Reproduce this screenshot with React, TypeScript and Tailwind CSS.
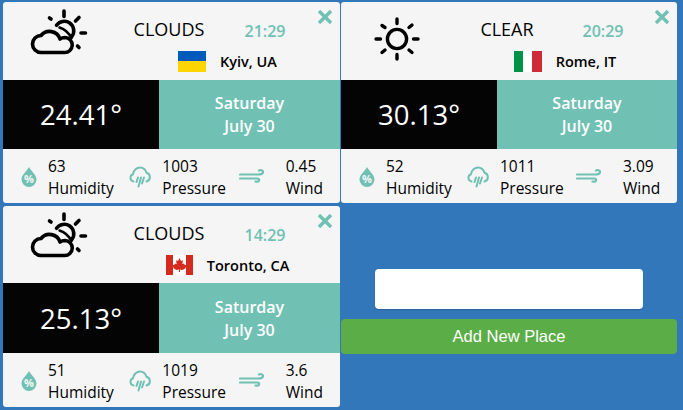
import React from 'react';

const TEAL = '#70c1b3';

const CloudSun = () => (
  <svg width="62" height="48" viewBox="28 8 62 48" fill="none" stroke="#000" strokeWidth="3.6" strokeLinecap="round" strokeLinejoin="round">
    <path d="M41 52.5H64.5A7.5 7.5 0 0 0 65 37.5C63 37.5 61.5 38 60 39A11 11 0 0 0 41 35.5A8.5 8.5 0 0 0 41 52.5Z" />
    <path d="M56.5 25.3A9.5 9.5 0 1 1 72 36.3" />
    <path d="M59.5 27.5C64 29 69 33 71.5 38" strokeWidth="2.6" />
    <path d="M64 11V16.5M75.5 21L79 17.5M81 33H85.5M77.5 46L79 47.5M49.5 18L51 19" />
  </svg>
);

const Sun = () => (
  <svg width="48" height="48" viewBox="373 15 48 48" fill="none" stroke="#000" strokeWidth="3.4" strokeLinecap="round">
    <circle cx="397" cy="39" r="9.6" />
    <path d="M397 19V23.5M397 54.5V59M376 39H380.5M413.5 39H418M382 25.5L385 27.5M409 27.5L412 25M382 52.5L385 50M409 50L412 52.5" />
  </svg>
);

const Drop = () => (
  <svg width="16" height="20" viewBox="0 0 16 20" className="mt-[1px]">
    <path d="M8 0C10 4 15.5 7.5 15.5 12.5A7.5 7.5 0 0 1 0.5 12.5C0.5 7.5 6 4 8 0Z" fill={TEAL} />
    <text x="8" y="16" textAnchor="middle" fontSize="11" fontWeight="700" fill="#f5f5f5" fontFamily="'Open Sans', sans-serif">%</text>
  </svg>
);

const CloudRain = () => (
  <svg width="22" height="22" viewBox="0 0 22 22" fill="none" stroke={TEAL} strokeWidth="2" strokeLinecap="round" strokeLinejoin="round">
    <path d="M4.5 15.5A3.8 3.8 0 0 1 4 8.2C4.5 4 8 1.5 11 1.5C14 1.5 16.5 3.5 17.5 6.8A4.5 4.5 0 0 1 17.5 15.5" />
    <path d="M9 11.5L7.5 16M12 11.5L9.5 20.5M15 11.5L13 17.5" />
  </svg>
);

const Wind = () => (
  <svg width="25" height="15" viewBox="0 0 25 15" fill="none" stroke={TEAL} strokeWidth="2.2" strokeLinecap="round">
    <path d="M1 5.5H19C22 5.5 24 4.5 24 2.8C24 1.2 21.5 0.8 20 1.5" />
    <path d="M1 9.5H18C20 9.5 20.5 10.5 20 11.7C19.5 12.7 18 12.8 16.5 12.5" />
  </svg>
);

const Close = () => (
  <svg width="14" height="14" viewBox="0 0 14 14" stroke={TEAL} strokeWidth="3.4" strokeLinecap="square">
    <path d="M2.2 2.2L11.8 11.8M11.8 2.2L2.2 11.8" />
  </svg>
);

const UA = () => (
  <div className="w-[28px] h-[21px] flex flex-col">
    <div className="flex-1 bg-[#005bbb]" />
    <div className="flex-1 bg-[#ffd500]" />
  </div>
);

const IT = () => (
  <div className="w-[28px] h-[21px] flex">
    <div className="flex-1 bg-[#009246]" />
    <div className="flex-1 bg-white" />
    <div className="flex-1 bg-[#ce2b37]" />
  </div>
);

const CA = () => (
  <svg width="27" height="20" viewBox="0 0 27 20">
    <rect width="27" height="20" fill="#fff" />
    <rect width="7" height="20" fill="#d52b1e" />
    <rect x="20" width="7" height="20" fill="#d52b1e" />
    <path d="M13.5 3L15 6L17 5.2L16.3 9L18 8.4L18.8 10L20.5 10L19.5 12.5L20 13L16.5 15L14 14.5L14 17H13L13 14.5L10.5 15L7 13L7.5 12.5L6.5 10L8.2 10L9 8.4L10.7 9L10 5.2L12 6Z" fill="#d52b1e" />
  </svg>
);

interface Place {
  condition: string;
  time: string;
  city: string;
  temp: string;
  humidity: string;
  pressure: string;
  wind: string;
  Icon: React.FC;
  Flag: React.FC;
  topClass: string;
  barClass: string;
  iconClass: string;
}

const PLACES: Place[] = [
  { condition: 'CLOUDS', time: '21:29', city: 'Kyiv, UA', temp: '24.41°', humidity: '63', pressure: '1003', wind: '0.45', Icon: CloudSun, Flag: UA, topClass: 'h-[78px]', barClass: 'h-[69px]', iconClass: 'pl-[25px] pt-[6px] w-[112px]' },
  { condition: 'CLEAR', time: '20:29', city: 'Rome, IT', temp: '30.13°', humidity: '52', pressure: '1011', wind: '3.09', Icon: Sun, Flag: IT, topClass: 'h-[78px]', barClass: 'h-[69px]', iconClass: 'pl-[32px] pt-[13px] w-[112px]' },
  { condition: 'CLOUDS', time: '14:29', city: 'Toronto, CA', temp: '25.13°', humidity: '51', pressure: '1019', wind: '3.6', Icon: CloudSun, Flag: CA, topClass: 'h-[77px]', barClass: 'h-[70px]', iconClass: 'pl-[25px] pt-[5px] w-[112px]' },
];

const Card = ({ place }: { place: Place }) => {
  const { Icon, Flag } = place;
  return (
    <div className="relative bg-[#f5f5f5] rounded-[3px] overflow-hidden text-black">
      <div className={`flex ${place.topClass}`}>
        <div className={place.iconClass}>
          <Icon />
        </div>
        <div className="flex-1 pt-[14px]">
          <div className="flex items-end h-[26px]">
            <div className="w-[108px] text-center text-[18px] leading-[26px]">{place.condition}</div>
            <div className="w-[84px] text-center text-[16px] leading-[24px] font-semibold text-[#70c1b3] translate-y-[1px]">{place.time}</div>
          </div>
          <div className="flex items-center justify-center gap-[14px] mt-[8px]">
            <Flag />
            <span className="text-[14.5px] leading-[21px] font-semibold pt-[1px]">{place.city}</span>
          </div>
        </div>
      </div>
      <button className="absolute top-[8px] right-[8px]" aria-label="Remove">
        <Close />
      </button>
      <div className={`flex ${place.barClass}`}>
        <div className="w-[156px] bg-[#040404] text-white text-[27.5px] pt-[1px] flex items-center justify-center">{place.temp}</div>
        <div className="flex-1 bg-[#70c1b3] text-white text-[16px] leading-[23px] pt-[1px] font-semibold flex flex-col items-center justify-center">
          <span>Saturday</span>
          <span>July 30</span>
        </div>
      </div>
      <div className="grid grid-cols-3 h-[54px] pt-[1px] text-[15.5px] leading-[22px]">
        <div className="flex items-center pl-[18px]">
          <div className="w-[27px]"><Drop /></div>
          <div>
            <div>{place.humidity}</div>
            <div>Humidity</div>
          </div>
        </div>
        <div className="flex items-center pl-[14px]">
          <div className="w-[33px]"><CloudRain /></div>
          <div>
            <div>{place.pressure}</div>
            <div>Pressure</div>
          </div>
        </div>
        <div className="flex items-center pl-[11px]">
          <div className="w-[47px]"><Wind /></div>
          <div>
            <div>{place.wind}</div>
            <div>Wind</div>
          </div>
        </div>
      </div>
    </div>
  );
};

export default function App() {
  return (
    <div className="h-[410px] bg-[#3277b9] pl-[3px] pt-[2px] font-['Open_Sans',sans-serif]">
      <div className="grid grid-cols-[337px_336px] gap-x-px gap-y-[3px]">
        {PLACES.map((place) => (
          <Card key={place.city} place={place} />
        ))}
        <div className="flex flex-col items-center pt-[63px] gap-[10px]">
          <input type="text" className="w-[268px] h-[40px] bg-white rounded-[4px] shadow-[0_1px_1px_rgba(0,0,0,0.2)] outline-none" />
          <button className="w-full h-[35px] bg-[#5bae47] rounded-[4px] text-white text-[16.5px] font-['Liberation_Sans',sans-serif]">Add New Place</button>
        </div>
      </div>
    </div>
  );
}
